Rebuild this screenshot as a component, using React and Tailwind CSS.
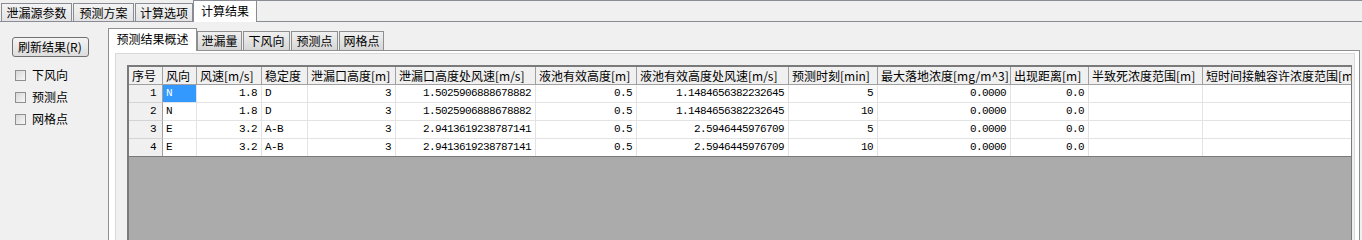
import React from 'react';

const cjk = "font-['Noto_Sans_CJK_SC',sans-serif]";
const mono = "font-['Liberation_Mono','Noto_Sans_CJK_SC',monospace]";

// column definitions: header text, width class, alignment
const cols = [
    { h: '序号', w: 'w-[34px]', right: true },
    { h: '风向', w: 'w-[34px]' },
    { h: '风速[m/s]', w: 'w-[65px]', right: true },
    { h: '稳定度', w: 'w-[46px]' },
    { h: '泄漏口高度[m]', w: 'w-[88px]', right: true },
    { h: '泄漏口高度处风速[m/s]', w: 'w-[140px]', right: true },
    { h: '液池有效高度[m]', w: 'w-[101px]', right: true },
    { h: '液池有效高度处风速[m/s]', w: 'w-[152px]', right: true },
    { h: '预测时刻[min]', w: 'w-[89px]', right: true },
    { h: '最大落地浓度[mg/m^3]', w: 'w-[133px]', right: true },
    { h: '出现距离[m]', w: 'w-[78px]', right: true },
    { h: '半致死浓度范围[m]', w: 'w-[114px]', right: true },
    { h: '短时间接触容许浓度范围[m]', w: 'w-[220px]', right: true },
];

const rows = [
    ['1', 'N', '1.8', 'D', '3', '1.5025906888678882', '0.5', '1.1484656382232645', '5', '0.0000', '0.0', '', ''],
    ['2', 'N', '1.8', 'D', '3', '1.5025906888678882', '0.5', '1.1484656382232645', '10', '0.0000', '0.0', '', ''],
    ['3', 'E', '3.2', 'A-B', '3', '2.9413619238787141', '0.5', '2.5946445976709', '5', '0.0000', '0.0', '', ''],
    ['4', 'E', '3.2', 'A-B', '3', '2.9413619238787141', '0.5', '2.5946445976709', '10', '0.0000', '0.0', '', ''],
];

function TopTab({ label, w, active }) {
    if (active) {
        return (
            <div className={`${w} h-[22px] bg-white border-l border-r border-t border-[#898c95] flex justify-center pt-[1px] text-[12px] leading-[17px] shrink-0`}>
                {label}
            </div>
        );
    }
    return (
        <div className={`${w} h-[19px] bg-gradient-to-b from-[#f3f3f3] to-[#e3e3e3] border border-[#898c95] flex justify-center text-[12px] leading-[17px] shrink-0`}>
            {label}
        </div>
    );
}

function InnerTab({ label, w, active }) {
    if (active) {
        return (
            <div className={`${w} h-[23px] bg-white border-l border-r border-t border-[#8e8f8f] flex justify-center pt-[1px] text-[12px] leading-[17px] shrink-0`}>
                {label}
            </div>
        );
    }
    return (
        <div className={`${w} h-[20px] bg-gradient-to-b from-[#f0f0f0] to-[#d6d6d6] border border-[#8e8f8f] flex justify-center text-[12px] leading-[18px] shrink-0`}>
            {label}
        </div>
    );
}

function Check({ label }) {
    return (
        <div className="flex items-center h-[12px] gap-[6px] ml-[15px]">
            <div className="w-[11px] h-[11px] border border-[#8e8f8f] bg-gradient-to-br from-[#d8d8d8] to-[#f7f7f7]" />
            <span className="text-[12px] leading-[12px]">{label}</span>
        </div>
    );
}

export default function App() {
    return (
        <div className={`w-[1362px] h-[240px] bg-[#f0f0f0] overflow-hidden flex flex-col text-black ${cjk}`}>
            {/* outer tab strip */}
            <div className="flex items-end h-[22px] shrink-0">
                <div className="w-[1px] h-[22px] border-b border-[#898c95] shrink-0" />
                <TopTab label="泄漏源参数" w="w-[71px]" />
                <div className="w-[1px] h-[22px] border-b border-[#898c95] shrink-0" />
                <TopTab label="预测方案" w="w-[61px]" />
                <div className="w-[1px] h-[22px] border-b border-[#898c95] shrink-0" />
                <TopTab label="计算选项" w="w-[58px]" />
                <TopTab label="计算结果" w="w-[64px]" active />
                <div className="flex-1 h-[22px] border-t border-b border-[#898c95]" />
            </div>

            <div className="flex flex-1 min-h-0">
                {/* left options */}
                <div className="w-[108px] shrink-0 flex flex-col">
                    <button className="ml-[12px] mt-[15px] w-[77px] h-[20px] rounded-[3px] border border-[#707070] bg-gradient-to-b from-[#f4f4f4] to-[#dddddd] text-[12px] leading-[18px] text-left pl-[5px]">
                        刷新结果(R)
                    </button>
                    <div className="mt-[12px] flex flex-col gap-[10px]">
                        <Check label="下风向" />
                        <Check label="预测点" />
                        <Check label="网格点" />
                    </div>
                </div>

                {/* inner tab control */}
                <div className="flex-1 min-w-0 flex flex-col pt-[6px] mr-[2px]">
                    <div className="flex items-end h-[23px] shrink-0">
                        <InnerTab label="预测结果概述" w="w-[89px]" active />
                        <InnerTab label="泄漏量" w="w-[45px]" />
                        <div className="w-[1px] h-[20px] border-b border-[#8e8f8f] shrink-0" />
                        <InnerTab label="下风向" w="w-[47px]" />
                        <div className="w-[1px] h-[20px] border-b border-[#8e8f8f] shrink-0" />
                        <InnerTab label="预测点" w="w-[47px]" />
                        <div className="w-[1px] h-[20px] border-b border-[#8e8f8f] shrink-0" />
                        <InnerTab label="网格点" w="w-[45px]" />
                        <div className="flex-1 h-[20px] border-b border-[#8e8f8f]" />
                    </div>

                    <div className="flex-1 min-h-0 flex flex-col bg-white border-l border-r border-[#8e8f8f] pl-[6px] pr-[4px] pt-[2px]">
                        <div className="flex-1 min-h-0 flex flex-col bg-[#f0f0f0] border-l border-t border-r border-[#d9d9d9] pl-[11px] pt-[11px] pr-[2px]">
                            {/* grid */}
                            <div className="flex-1 min-h-0 flex flex-col overflow-hidden border-l-2 border-t-2 border-r border-[#7a7a7a] bg-[#ababab]">
                                <div className="flex h-[18px] shrink-0 bg-[#f0f0f0]">
                                    {cols.map((c, i) => (
                                        <div key={i} className={`${c.w} shrink-0 h-[18px] border-r border-b border-[#a0a0a0] pl-[3px] text-[12px] leading-[17px] whitespace-nowrap overflow-hidden`}>
                                            {c.h}
                                        </div>
                                    ))}
                                </div>
                                {rows.map((r, ri) => (
                                    <div key={ri} className={`flex h-[18px] shrink-0 ${ri === rows.length - 1 ? 'border-b border-[#7a7a7a]' : ''}`}>
                                        {r.map((v, ci) => {
                                            const c = cols[ci];
                                            const last = ri === rows.length - 1;
                                            if (ci === 0) {
                                                return (
                                                    <div key={ci} className={`${c.w} shrink-0 bg-[#f0f0f0] border-r border-[#a0a0a0] ${last ? '' : 'border-b border-b-[#d4d4d4]'} flex justify-end items-center pr-[6px] text-[11px] tracking-[-0.6px] ${mono}`}>
                                                        {v}
                                                    </div>
                                                );
                                            }
                                            const sel = ri === 0 && ci === 1;
                                            return (
                                                <div key={ci} className={`${c.w} shrink-0 border-r border-[#e3e3e3] ${last ? '' : 'border-b'} flex items-center ${c.right ? 'justify-end pr-[4px]' : 'pl-[3px]'} ${sel ? 'bg-[#3399ff] text-white' : 'bg-white'} text-[11px] tracking-[-0.6px] whitespace-nowrap ${mono}`}>
                                                    {v}
                                                </div>
                                            );
                                        })}
                                    </div>
                                ))}
                                <div className="flex-1 bg-[#ababab]" />
                            </div>
                        </div>
                    </div>
                </div>
            </div>
        </div>
    );
}
